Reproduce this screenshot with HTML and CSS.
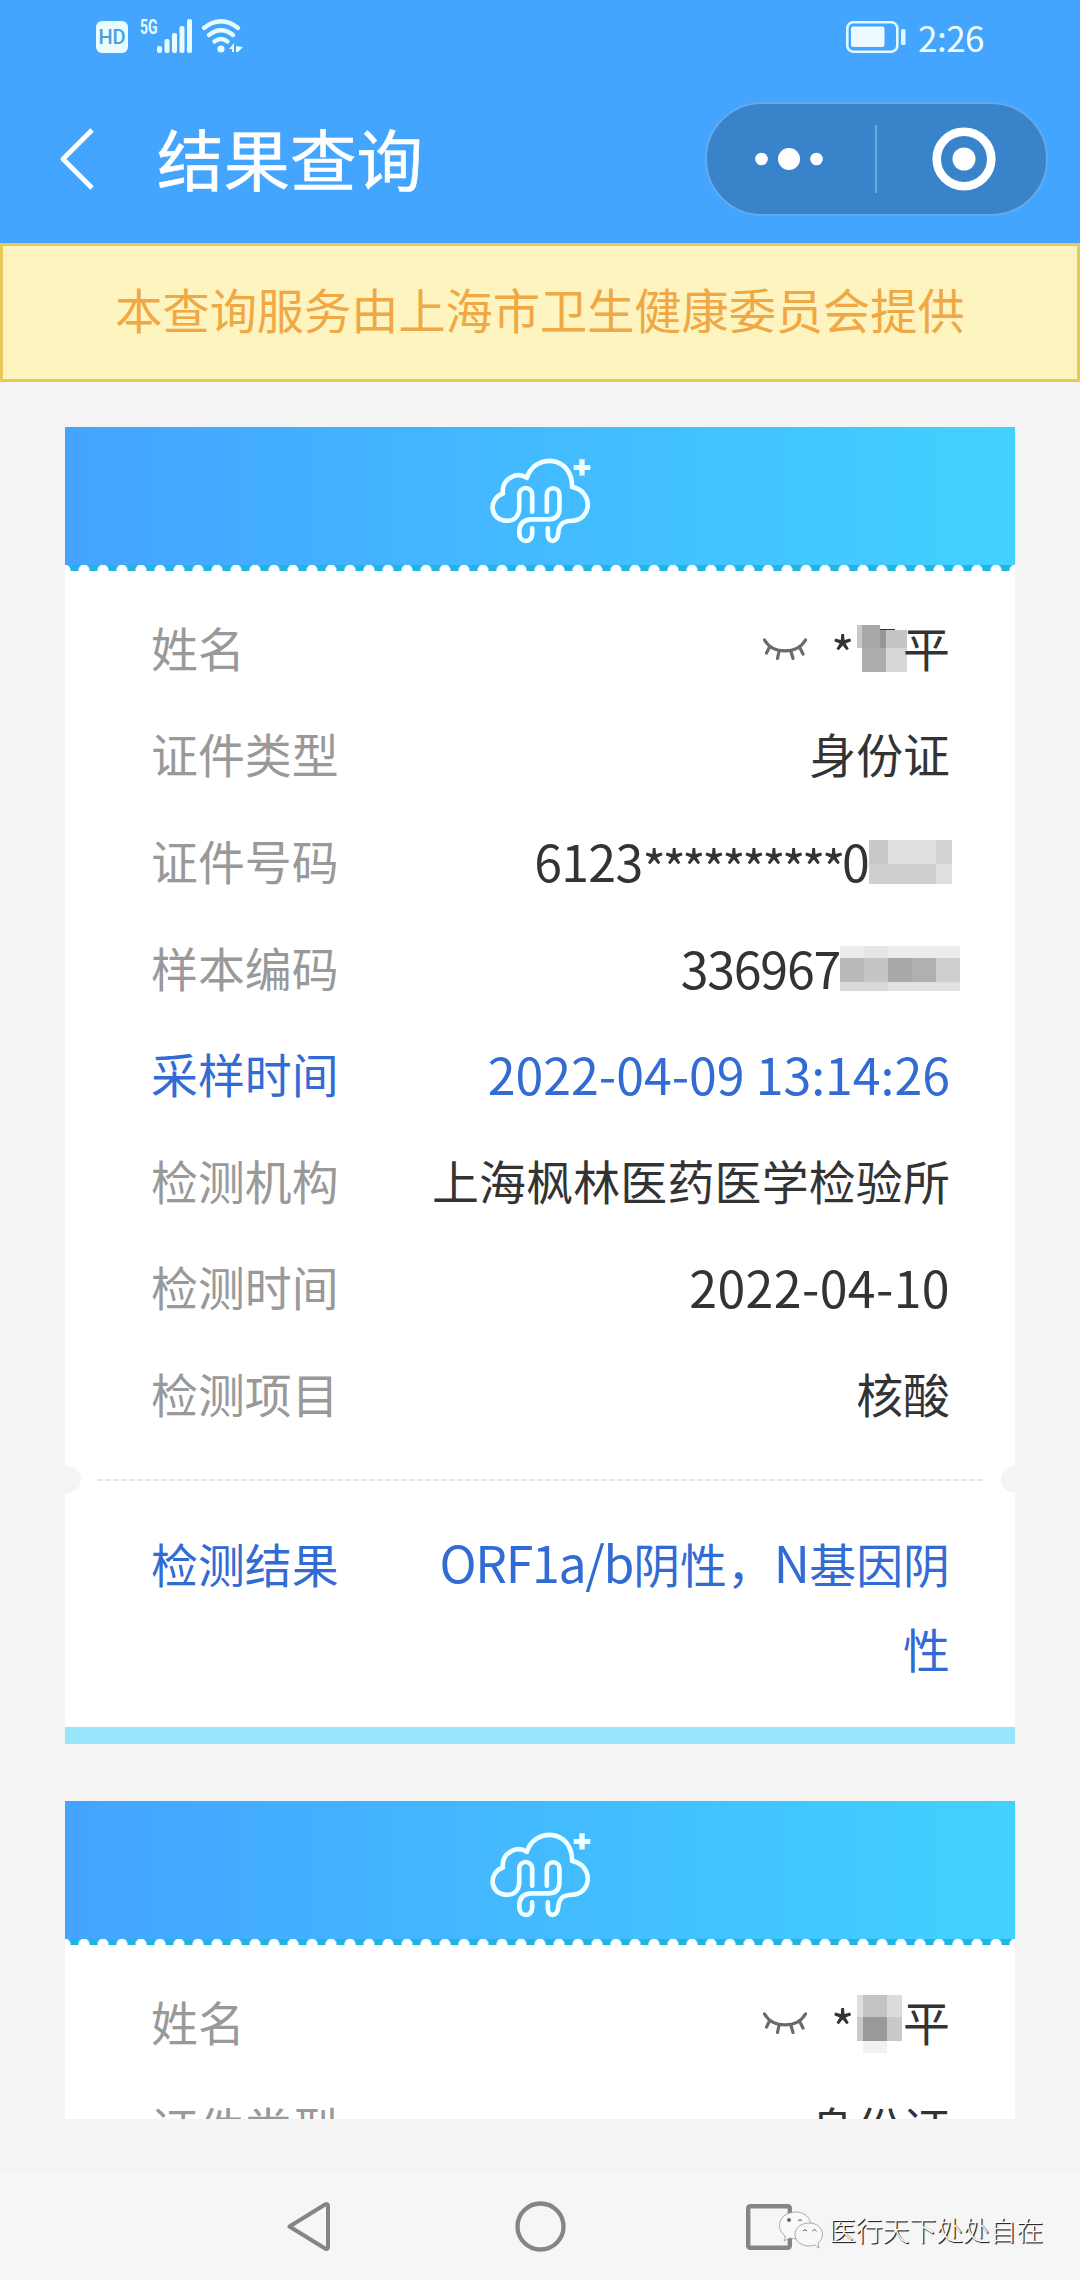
FILE: index.html
```html
<!DOCTYPE html>
<html lang="zh-CN">
<head>
<meta charset="utf-8">
<title>结果查询</title>
<link rel="stylesheet" href="styles.css">
</head>
<body>
<svg class="defs" width="0" height="0" aria-hidden="true">
  <symbol id="cloud" viewBox="85 110 310 265">
    <g fill="none" stroke="#f0ffff" stroke-width="14" stroke-linecap="round" stroke-linejoin="round">
      <path d="M262 325V343C262 369 290 369 293 343C295 310 310 303 335 302C394 300 402 214 335 200C336 104 222 98 199 173C165 151 121 180 127 220C82 235 85 302 140 302C165 302 176 284 176 262V223A19.500 19.500 0 0 1 215 223V275"/>
      <path d="M259 275V223A19 19 0 0 1 297 223V265Q297 298 262 298H215C186 298 176 315 176 337C176 372 215 370 215 340V325"/>
    </g>
    <path d="M357 117h16v17h17v15h-17v17h-16v-17h-17v-15h17z" fill="#f0ffff"/>
  </symbol>
  <symbol id="eye" viewBox="0 0 44 22">
    <path d="M1.500 2C10 16.500 34 16.500 42.500 2M6 10L3.500 15M16 13.500L14.500 20.500M28 13.500L30 20.500M37 10L40 16" fill="none" stroke="#6a6a6a" stroke-width="3.200" stroke-linecap="round"/>
  </symbol>
</svg>

<header class="top">
  <div class="status">
    <div class="status-left">
      <span class="hd">HD</span>
      <span class="net">5G</span>
      <svg class="signal" width="36" height="34" viewBox="0 0 36 34" fill="#e8fcff">
        <rect x="0" y="27" width="5" height="7" rx="2"/><rect x="7.500" y="20" width="5" height="14" rx="2"/><rect x="15" y="14" width="5" height="20" rx="2"/><rect x="22.500" y="7" width="5" height="27" rx="2"/><rect x="30" y="0" width="5" height="34" rx="2"/>
      </svg>
      <svg class="wifi" width="42" height="34" viewBox="0 0 42 34">
        <path d="M2 9Q19 -4.500 36 9M7 16Q19 6.500 31 16M12.500 22.500Q19 17.500 25.500 22.500" fill="none" stroke="#e8fcff" stroke-width="4.200" stroke-linecap="round"/>
        <circle cx="19" cy="30" r="3.600" fill="#e8fcff"/>
        <path d="M27 30L32 24V33H30V30zM34 24V27L41 28L36 33H34z" fill="#e8fcff"/>
      </svg>
    </div>
    <div class="status-right">
      <svg width="60" height="32" viewBox="0 0 60 32">
        <rect x="1.300" y="1.300" width="50" height="29.400" rx="6" fill="none" stroke="#e0faff" stroke-width="2.600"/>
        <rect x="5" y="5.500" width="33.500" height="20.500" rx="2" fill="#eef8ff"/>
        <rect x="55" y="8" width="4.500" height="16" rx="1.500" fill="#e0faff"/>
      </svg>
      <span class="clock">2:26</span>
    </div>
  </div>
  <div class="bar">
    <svg class="back" width="36" height="64" viewBox="0 0 36 64"><path d="M33 3L4 32L33 61" fill="none" stroke="#fff" stroke-width="4.800" stroke-linejoin="round"/></svg>
    <h1 class="title">结果查询</h1>
    <div class="capsule">
      <svg class="more" width="68" height="24" viewBox="0 0 68 24" fill="#fff"><circle cx="6.500" cy="12" r="6.300"/><circle cx="34" cy="12" r="11"/><circle cx="61.500" cy="12" r="6.300"/></svg>
      <span class="split"></span>
      <svg class="target" width="64" height="64" viewBox="0 0 64 64"><circle cx="32" cy="32" r="27.300" fill="none" stroke="#fff" stroke-width="8.600"/><circle cx="32" cy="32" r="11.500" fill="#fff"/></svg>
    </div>
  </div>
</header>

<div class="notice">本查询服务由上海市卫生健康委员会提供</div>

<main class="list">
  <section class="card">
    <div class="card-head"><svg class="cloud"><use href="#cloud"/></svg><div class="teeth"></div></div>
    <dl class="rows">
      <div class="row"><dt>姓名</dt><dd><svg class="eye"><use href="#eye"/></svg><span class="num star">*</span>
        <svg class="mask-name" width="50" height="47" viewBox="0 0 50 47" shape-rendering="crispEdges">
          <path fill="#c8c8c8" d="M0 0h5v23H0z"/><path fill="#a8a8a8" d="M5 0h18v23H5z"/><path fill="#979797" d="M23 5h6v18h-6z"/><path fill="#c5c5c5" d="M29 5h21v18H29z"/><path fill="#333" d="M23 4h15v1H23z"/><path fill="#acacac" d="M5 23h24v24H5z"/><path fill="#d7d7d7" d="M29 23h21v24H29z"/>
        </svg><span class="last">平</span></dd></div>
      <div class="row"><dt>证件类型</dt><dd>身份证</dd></div>
      <div class="row"><dt>证件号码</dt><dd class="over-id"><span class="num">6123<span class="stars">**********</span>0</span>
        <svg class="mask-id" width="83" height="44" viewBox="0 0 83 44" shape-rendering="crispEdges">
          <path fill="#c9c9c9" d="M0 0h19v24H0z"/><path fill="#dfdfdf" d="M19 0h48v24H19z"/><path fill="#d2d2d2" d="M67 0h16v24H67z"/><path fill="#cfcfcf" d="M0 24h67v20H0z"/><path fill="#dfdfdf" d="M67 24h16v20H67z"/>
        </svg></dd></div>
      <div class="row"><dt>样本编码</dt><dd class="over-sample"><span class="num sample">336967</span>
        <svg class="mask-sample" width="120" height="45" viewBox="0 0 120 45" shape-rendering="crispEdges">
          <path fill="#ececec" d="M0 0h120v12H0z"/><path fill="#e5e5e5" d="M24 0h24v12H24z"/><path fill="#bababa" d="M0 12h24v24H0z"/><path fill="#c5c5c5" d="M24 12h24v24H24z"/><path fill="#a8a8a8" d="M48 12h24v24H48z"/><path fill="#b0b0b0" d="M72 12h24v24H72z"/><path fill="#cfcfcf" d="M96 12h24v24H96z"/><path fill="#d9d9d9" d="M0 36h48v9H0z"/><path fill="#e2e2e2" d="M48 36h72v9H48z"/>
        </svg></dd></div>
      <div class="row blue"><dt>采样时间</dt><dd><span class="num datetime">2022-04-09 13:14:26</span></dd></div>
      <div class="row"><dt>检测机构</dt><dd class="org">上海枫林医药医学检验所</dd></div>
      <div class="row"><dt>检测时间</dt><dd><span class="num date">2022-04-10</span></dd></div>
      <div class="row"><dt>检测项目</dt><dd>核酸</dd></div>
    </dl>
    <div class="tear"><i class="notch"></i><svg class="dash" width="888" height="2"><path d="M0 1H888" stroke="#e0e0e0" stroke-width="1.500" stroke-dasharray="6 2"/></svg><i class="notch right"></i></div>
    <dl class="result blue"><dt>检测结果</dt><dd><span class="num latin">ORF1a/b</span>阴性，<span class="num">N</span>基因阴<br>性</dd></dl>
    <div class="foot"></div>
  </section>

  <section class="card">
    <div class="card-head"><svg class="cloud"><use href="#cloud"/></svg><div class="teeth"></div></div>
    <dl class="rows">
      <div class="row"><dt>姓名</dt><dd><svg class="eye"><use href="#eye"/></svg><span class="num star">*</span>
        <svg class="mask-name second" width="50" height="59" viewBox="0 0 50 59" shape-rendering="crispEdges">
          <path fill="#dedede" d="M0 0h6v22H0z"/><path fill="#c4c4c4" d="M6 0h24v22H6z"/><path fill="#dcdcdc" d="M30 0h15v22H30z"/><path fill="#c9c9c9" d="M0 22h6v24H0zM30 22h15v24H30z"/><path fill="#999" d="M6 22h24v24H6z"/><path fill="#f2f2f2" d="M6 46h24v12H6z"/>
        </svg><span class="last">平</span></dd></div>
      <div class="row"><dt>证件类型</dt><dd>身份证</dd></div>
    </dl>
  </section>
</main>

<nav class="nav">
  <svg class="nav-back" width="44" height="51" viewBox="0 0 44 51"><path d="M2.500 25.500L38.500 3.200Q41 2.500 41 5V46Q41 48.500 38.500 47.800Z" fill="none" stroke="#858585" stroke-width="4" stroke-linejoin="round"/></svg>
  <svg class="nav-home" width="51" height="51" viewBox="0 0 51 51"><circle cx="25.500" cy="25.500" r="23" fill="none" stroke="#858585" stroke-width="4.300"/></svg>
  <svg class="nav-recent" width="46" height="46" viewBox="0 0 46 46"><rect x="2.200" y="2.200" width="41.600" height="41.600" rx="2" fill="none" stroke="#858585" stroke-width="4.400"/></svg>
  <div class="mark">
    <svg width="44" height="38" viewBox="0 0 44 38" stroke="#8a8a8a" stroke-width=".7">
      <path d="M17 1C7 1 .5 7 .5 14.500C.5 19 3 22.500 6.500 25L5 30L11 27C14 28 17 28 20 27.500L32 14C31 6 25 1 17 1Z" fill="#fafafa"/>
      <path d="M30 12C21.500 12 16 17 16 23.500C16 30 22 35 30 35C32 35 34 34.700 35.500 34L40 37L39 32C42 30 43.500 27 43.500 23.500C43.500 17 38 12 30 12Z" fill="#f8f8f8"/>
      <path d="M19 10q2-3 4 0M24 20q2-3 4 0M33.500 20q2-3 4 0" fill="none" stroke="#555" stroke-width="1"/><circle cx="10" cy="9" r="1.800" fill="#555"/>
    </svg>
    <span>医行天下处处自在</span>
  </div>
</nav>
</body>
</html>
```

FILE: styles.css
```css
* { box-sizing: border-box; margin: 0; padding: 0; }
body {
  width: 1080px;
  height: 2280px;
  display: flex;
  flex-direction: column;
  overflow: hidden;
  background: #f4f4f4;
  font-family: "Noto Sans CJK SC", "Noto Sans", sans-serif;
  color: #333;
}
svg { display: block; flex: none; }
.defs { position: absolute; }

/* status bar and title */
.top { height: 243px; background: #44a5ff; flex: none; color: #fff; }
.status { height: 72px; display: flex; justify-content: space-between; padding: 19px 96px 0 96px; }
.status-left { display: flex; align-items: flex-start; }
.hd {
  width: 32px; height: 32px; margin-top: 2px;
  border-radius: 6px;
  background: #e8fcff; color: #4a9fdc;
  font: 500 20px/33px Roboto, sans-serif;
  text-align: center;
}
.net { width: 17px; margin-left: 12px; font: 700 20px/16px Roboto, sans-serif; transform: scaleX(.7); transform-origin: 0 0; color: #e8fcff; }
.wifi { margin-left: 9px; }
.status-right { display: flex; align-items: flex-start; padding-top: 2px; }
.clock { margin-left: 12px; font-size: 35px; line-height: 31px; letter-spacing: -.5px; color: #effdff; }
.bar { height: 171px; display: flex; align-items: center; padding: 2px 32px 0 59px; }
.title { margin: -3px 0 0 62px; font-size: 66.500px; line-height: 90px; font-weight: 400; -webkit-text-stroke: .5px #fff; }
.capsule {
  width: 343px; height: 114px; margin-left: auto;
  display: flex; align-items: center;
  border: 2px solid #66a9e8; border-radius: 57px;
  background: #3883ca;
}
.more { margin-left: 48px; }
.split { width: 2px; height: 68px; margin-left: 52px; background: #6aaae4; }
.target { margin-left: 55px; }

.notice {
  height: 139px; flex: none;
  border: 3px solid #e6c958;
  background: #fdf4c0;
  color: #efa844;
  font-size: 47.200px; line-height: 126px;
  text-align: center;
  white-space: nowrap;
}

/* result cards */
.list {
  height: 1737px; flex: none;
  display: flex; flex-direction: column; gap: 57px;
  padding: 45px 65px 0;
  overflow: hidden;
}
.card { flex: none; background: #fff; }
.card-head {
  height: 144px;
  display: flex; flex-direction: column; align-items: center; justify-content: space-between;
  padding-top: 30px;
  background: linear-gradient(90deg, #44a4ff, #42d1ff);
}
.cloud { width: 103px; height: 88px; }
.teeth {
  width: 950px; height: 6px;
  background: radial-gradient(circle at 9.500px 5px, #fff 5px, #1fb4e2 5.800px) -9.500px 0 / 19px 6px repeat-x;
}
.rows { padding-top: 24px; }
.row {
  height: 106.600px;
  display: flex; align-items: center; justify-content: space-between;
  padding: 0 65px 3px 86px;
  font-size: 46.900px; line-height: 70px;
}
dt { color: #999; }
.row dd { display: flex; align-items: center; }
.num { font-size: 50px; letter-spacing: -.7px; }
.sample { letter-spacing: -1.200px; }
.datetime { letter-spacing: 0; }
.date { letter-spacing: .4px; }
.stars { display: inline-block; letter-spacing: -3.400px; transform: translateY(6px); }
.org { letter-spacing: .2px; }
.eye { width: 44px; height: 22px; margin: 4px 24px 0 0; }
.star { width: 22px; transform: translateY(5px); }
.mask-name { margin: 3px -1px 0 4px; }
.mask-name.second { margin: 7px -1px 0 4px; }
.mask-id, .mask-sample { margin-top: 4px; }
.over-id { margin-right: -2px; }
.over-sample { margin-right: -10px; }
.last { margin-left: -3px; }
.blue, .blue dt { color: #326bd4; }

.tear { height: 28px; margin-top: 18px; display: flex; align-items: center; justify-content: space-between; }
.notch { width: 16px; height: 27px; border-radius: 0 14px 14px 0; background: #f4f4f4; }
.notch.right { width: 14px; border-radius: 14px 0 0 14px; }
.result {
  height: 233px;
  display: flex; justify-content: space-between;
  padding: 27px 65px 0 86px;
  font-size: 46.900px; line-height: 85px;
}
.result dd { text-align: right; }
.result .num { line-height: 1; }
.result .latin { letter-spacing: -1.300px; }
.foot { height: 17px; background: #98e6fc; }

/* system navigation */
.nav {
  height: 107px; margin-top: auto; flex: none;
  display: flex; align-items: center;
  padding: 0 0 0 287px;
  background: #f6f6f6;
}
.nav-home { margin-left: 184px; }
.nav-recent { margin-left: 180px; }
.mark { display: flex; align-items: center; margin: 6px 0 0 -13px; }
.mark span {
  margin-left: 6px;
  font-size: 26.800px; line-height: 36px; font-weight: 300;
  color: #fff;
  white-space: nowrap;
  text-shadow: 1px 1px 1px #222, 1px 1px 0 #444;
}
```
